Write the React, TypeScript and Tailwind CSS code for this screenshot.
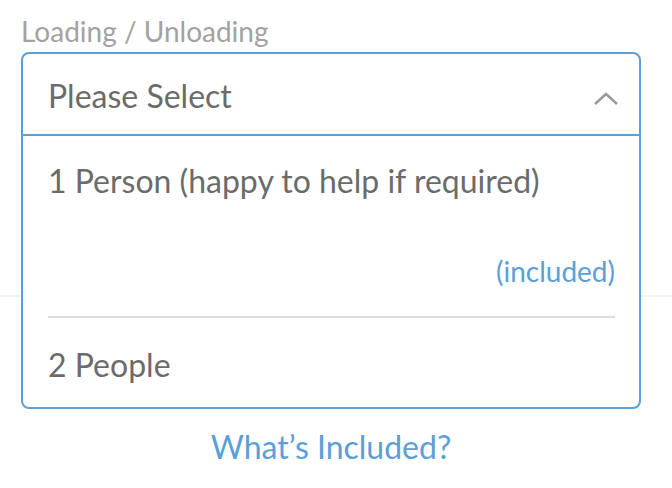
export default function App() {
  return (
    <div className="relative h-[488px] w-[672px] bg-white font-['Lato',sans-serif]">
      {/* content beneath the open list */}
      <div className="h-[297px] border-b-2 border-[#f3f3f3]" />

      <div className="absolute inset-x-0 top-0 pl-[21px] pr-[31px] pt-[14px]">
        <label className="block text-[28px] leading-[34px] text-[#a2a2a2]">Loading / Unloading</label>

        <div className="mt-[4px] overflow-hidden rounded-[8px] border-2 border-[#5b9fd8] bg-white">
          <button
            type="button"
            className="flex h-[82px] w-full items-center justify-between border-b-2 border-[#5b9fd8] pl-[25px] pr-[20px] pt-[4px] text-left"
          >
            <span className="text-[32px] text-[#6b6b6b]">Please Select</span>
            <svg className="mt-[6px]" width="26" height="14" viewBox="0 0 26 14" fill="none">
              <path d="M2 12 L13 2 L24 12" stroke="#9a9a9a" strokeWidth="2.5" />
            </svg>
          </button>

          <ul className="pl-[25px] pr-[24px]">
            <li className="flex h-[182px] flex-col border-b-2 border-[#dcdcdc] pt-[26px]">
              <span className="text-[32px] leading-[38px] text-[#6b6b6b]">1 Person (happy to help if required)</span>
              <span className="mt-auto mb-[28px] self-end text-[28px] leading-[34px] text-[#5b9fd8]">(included)</span>
            </li>
            <li className="h-[89px] pt-[28px]">
              <span className="text-[32px] leading-[38px] text-[#6b6b6b]">2 People</span>
            </li>
          </ul>
        </div>

        <div className="mt-[14px] text-center">
          <a className="text-[32px] text-[#5b9fd8]">What’s Included?</a>
        </div>
      </div>
    </div>
  );
}
